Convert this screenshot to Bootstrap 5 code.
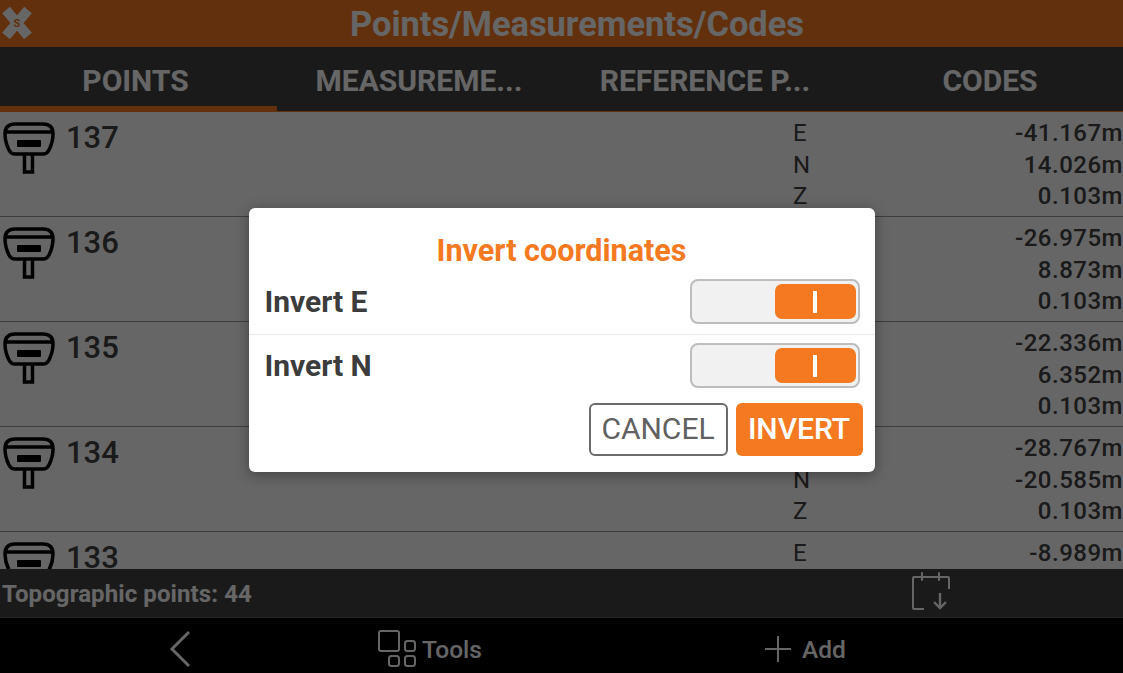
<!DOCTYPE html>
<html lang="en">
<head>
  <meta charset="UTF-8">
  <title>Points/Measurements/Codes</title>
  <link href="https://cdn.jsdelivr.net/npm/bootstrap@5.3.0/dist/css/bootstrap.min.css" rel="stylesheet">
  <style>
    html, body { height: 100%; }
    body { font-family: Roboto, "Liberation Sans", sans-serif; background: #000; overflow: hidden; }
    .app-shell { height: 673px; }
    .app-head { height: 47px; flex: none; background: #f47920; color: #fff; font-size: 34.4px; font-weight: 700; padding: 2px 0 0 31px; }
    .app-logo { left: 1px; top: 7px; }
    .tab-strip { height: 65px; flex: none; background: #424242; border-bottom: 1px solid #f47920; display: grid; grid-template-columns: 277px 284px 288px 274px; }
    .tab-item { color: #fff; font-size: 30px; font-weight: 700; padding-top: 11px; text-align: center; white-space: nowrap; }
    .tab-item.on { border-bottom: 5px solid #f47920; padding-right: 6px; }
    .tab-item.tail { padding-left: 8px; }
    .pt-list { background: #fff; color: #424242; min-height: 0; }
    .pt-row { height: 105px; border-bottom: 1px solid #9a9a9a; flex: none; }
    .pt-icon { margin: 8px 0 0 2px; }
    .pt-name { font-size: 31px; font-weight: 500; margin: 6px 0 0 10px; line-height: 40px; }
    .pt-axis { position: absolute; left: 793px; top: 6px; font-size: 24px; line-height: 31.5px; }
    .pt-vals { position: absolute; right: 0; top: 6px; font-size: 24px; line-height: 31.5px; text-align: right; font-weight: 500; letter-spacing: .5px; }
    .sum-bar { height: 49px; flex: none; background: #424242; border-bottom: 1px solid #5c5c5c; color: #fff; font-size: 24px; font-weight: 700; }
    .sum-text { padding-left: 2px; margin-top: 2px; letter-spacing: .1px; }
    .sum-icon { position: absolute; left: 911px; top: 2px; }
    .nav-foot { height: 55px; flex: none; background: #000; color: #fff; font-size: 24.5px; font-weight: 500; padding-top: 6px; }
    .foot-back { margin-left: 168px; }
    .foot-tools { margin-left: 186px; gap: 5px; }
    .foot-add { margin-left: 283px; gap: 11px; }
    .foot-word { padding-top: 4px; }
    .dim-layer { background: rgba(0, 0, 0, .6); padding-top: 7px; }
    .inv-box { width: 626px; height: 264px; background: #fff; border-radius: 6px; box-shadow: 0 3px 14px rgba(0, 0, 0, .35); color: #3c3c3c; }
    .inv-title { color: #f47920; font-size: 30.5px; font-weight: 700; text-align: center; padding-top: 24px; line-height: 37px; }
    .inv-line { height: 65px; padding: 0 15px 0 16px; font-size: 30px; font-weight: 700; }
    .inv-line + .inv-line { border-top: 1px solid #eaeaea; padding-bottom: 3px; }
    .inv-toggle { width: 170px; height: 45px; background: #f1f1f1; border: 2px solid #bdbdbd; border-radius: 8px; padding: 3px 2px 3px 3px; }
    .inv-thumb { width: 81px; height: 35px; background: #f47920; border-radius: 7px; }
    .inv-thumb::after { content: ""; width: 4px; height: 22px; background: #fff; }
    .inv-actions { padding: 4px 12px 0 0; gap: 8px; }
    .inv-btn { height: 53px; font-size: 30px; line-height: 1; padding: 0 0 2px; border-radius: 6px; font-weight: 400; }
    .inv-cancel { width: 139px; background: #fff; border: 2px solid #6b6b6b; color: #616161; }
    .inv-go { width: 127px; background: #f47920; border: 0; color: #fff; font-weight: 500; }
  </style>
</head>
<body>
  <div class="app-shell d-flex flex-column position-relative">
    <div class="app-head d-flex align-items-center justify-content-center position-relative">
      <svg class="app-logo position-absolute" width="32" height="32" viewBox="0 0 32 32">
        <path d="M5 3 L27 29 M27 3 L5 29" stroke="#fff" stroke-width="10" fill="none"/>
        <text x="16" y="20" font-size="11" font-weight="700" text-anchor="middle" fill="#f47920" font-family="Roboto">S</text>
      </svg>
      <span>Points/Measurements/Codes</span>
    </div>

    <div class="tab-strip">
      <div class="tab-item on">POINTS</div>
      <div class="tab-item">MEASUREME...</div>
      <div class="tab-item">REFERENCE P...</div>
      <div class="tab-item tail">CODES</div>
    </div>

    <div class="pt-list flex-grow-1 overflow-hidden d-flex flex-column" id="ptList"></div>

    <div class="sum-bar position-relative d-flex align-items-center">
      <span class="sum-text">Topographic points: 44</span>
      <svg class="sum-icon" width="40" height="42" viewBox="0 0 40 42" fill="none" stroke="#fff" stroke-width="2">
        <path d="M13 38 H3 Q2 38 2 37 V7 Q2 6 3 6 H37 Q38 6 38 7 V18"/>
        <path d="M11 2 V9 M28 2 V9" stroke-linecap="round"/>
        <path d="M29 22 V37 M23 31 L29 37 L35 31" stroke-width="2.4"/>
      </svg>
    </div>

    <div class="nav-foot d-flex align-items-center">
      <svg class="foot-back" width="24" height="38" viewBox="0 0 24 38" fill="none" stroke="#fff" stroke-width="3"><path d="M21 2 L4 19 L21 36"/></svg>
      <span class="foot-tools d-flex align-items-center">
        <svg width="39" height="37" viewBox="0 0 39 37" fill="none" stroke="#fff" stroke-width="2">
          <rect x="1" y="1" width="20" height="20" rx="2"/>
          <rect x="27" y="11" width="10" height="10" rx="2.5"/>
          <rect x="11" y="26" width="10" height="10" rx="2.5"/>
          <rect x="27" y="26" width="10" height="10" rx="2.5"/>
        </svg>
        <span class="foot-word">Tools</span>
      </span>
      <span class="foot-add d-flex align-items-center">
        <svg width="26" height="26" viewBox="0 0 26 26" stroke="#fff" stroke-width="2"><path d="M13 0 V26 M0 13 H26"/></svg>
        <span class="foot-word">Add</span>
      </span>
    </div>

    <div class="dim-layer position-absolute top-0 start-0 w-100 h-100 d-flex align-items-center justify-content-center">
      <div class="inv-box">
        <div class="inv-title">Invert coordinates</div>
        <div class="inv-line d-flex align-items-center justify-content-between">
          <span>Invert E</span>
          <div class="inv-toggle d-flex justify-content-end"><div class="inv-thumb d-flex align-items-center justify-content-center"></div></div>
        </div>
        <div class="inv-line d-flex align-items-center justify-content-between">
          <span>Invert N</span>
          <div class="inv-toggle d-flex justify-content-end"><div class="inv-thumb d-flex align-items-center justify-content-center"></div></div>
        </div>
        <div class="inv-actions d-flex justify-content-end">
          <button type="button" class="btn inv-btn inv-cancel">CANCEL</button>
          <button type="button" class="btn inv-btn inv-go">INVERT</button>
        </div>
      </div>
    </div>
  </div>

  <script src="https://cdn.jsdelivr.net/npm/bootstrap@5.3.0/dist/js/bootstrap.bundle.min.js"></script>
  <script>
    // the letters under the dialog are left blank, they can't be seen
    const puntos = [
      { n: 137, a: ["E", "N", "Z"], v: ["-41.167m", "14.026m", "0.103m"] },
      { n: 136, a: ["", "", ""], v: ["-26.975m", "8.873m", "0.103m"] },
      { n: 135, a: ["", "", ""], v: ["-22.336m", "6.352m", "0.103m"] },
      { n: 134, a: ["", "N", "Z"], v: ["-28.767m", "-20.585m", "0.103m"] },
      { n: 133, a: ["E"], v: ["-8.989m"] }
    ];
    const icono = `<svg class="pt-icon" width="54" height="54" viewBox="0 0 54 54" fill="none" stroke="#000" stroke-width="3.5">
      <path d="M3 14 Q3 4 13 4 H41 Q51 4 51 14 Q51 22 47 30 Q45 34 41 34 H13 Q9 34 7 30 Q3 22 3 14 Z"/>
      <path d="M3 12 H51"/>
      <rect x="15" y="20" width="24" height="7" rx="1" fill="#000" stroke="none"/>
      <path d="M22.5 34 V52 H30.5 V34"/>
    </svg>`;
    document.getElementById("ptList").innerHTML = puntos.map(p => `
      <div class="pt-row position-relative d-flex">
        ${icono}
        <span class="pt-name">${p.n}</span>
        <div class="pt-axis">${p.a.join("<br>")}</div>
        <div class="pt-vals">${p.v.join("<br>")}</div>
      </div>`).join("");
  </script>
</body>
</html>
